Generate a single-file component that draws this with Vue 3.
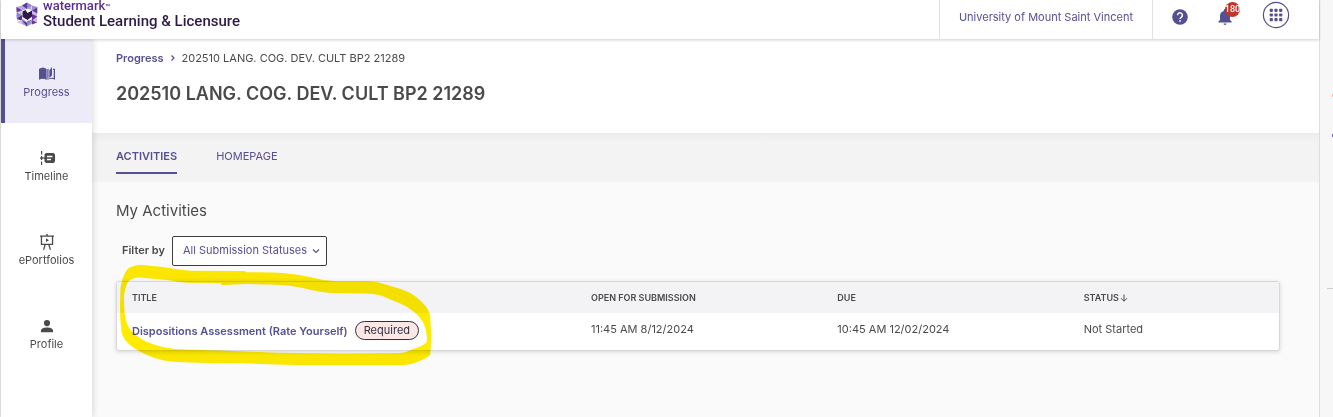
<template>
  <div class="shell">
    <div class="app">
      <header class="topbar">
        <a class="brand" href="#">
          <svg class="brand-mark" viewBox="0 0 24 26" aria-hidden="true">
            <path fill="#b5abd9" d="M12 1.500 16.500 4v5L12 8 7 9.500 2 12.500 1.500 6 7 4.500z" />
            <path fill="#cdc7e6" d="M7 9.500v8L2 20.500V12.500z" />
            <path fill="#a89dd3" d="M7 17.500l5 3.500 4.500-2.500 5.500 3-5.500 1.500L12 25.500 7 23z" />
            <path fill="#c4bce2" d="M16.500 8l5.500 4v9.500l-5.500-4z" />
            <path fill="#5b3a9b" d="M12 1.500V8L7 4.500z" />
            <path fill="#8d86c6" d="M12 1.500 17 4.500 12 7.500z" />
            <path fill="#6a35a0" d="M1.500 6 7 9.500 1.500 11z" />
            <path fill="#9a90cd" d="M17 4.500 22.300 6 17 9.500z" />
            <path fill="#6a35a0" d="M22.300 6v6.500L17 9.500z" />
            <path fill="#5b2d91" d="M1.500 17.500 7 14v6z" />
            <path fill="#8d86c6" d="M1.500 11.500 7 14l-5.500 3z" />
            <path fill="#6a35a0" d="M22.300 15.500 17 13v6.500z" />
            <path fill="#c9c3e5" d="M2 21.500 7 18.500v4.500z" />
            <path fill="#5b2d91" d="M7 19l5 3v3.500z" />
            <path fill="#8d86c6" d="M12 20l5-1.500-5 7z" />
            <path fill="#6a35a0" d="M17 19l5 2.500-5 2z" />
            <path fill="#2d1a45" d="M7.500 10.500 10.500 9l2 3L17 9.500v6L12.500 19 7.500 16z" />
          </svg>
          <span class="brand-text">
            <span class="brand-name">watermark<span class="brand-tm">™</span></span>
            <span class="brand-product">Student Learning &amp; Licensure</span>
          </span>
        </a>
        <div class="org">
          <a href="#">University of Mount Saint Vincent</a>
        </div>
        <div class="tools">
          <button class="tool" type="button" aria-label="Help">
            <svg class="help-icon" viewBox="0 0 16 16">
              <circle cx="8" cy="8" r="7.800" fill="#555092" />
              <path d="M5.600 6.300a2.400 2.400 0 1 1 3.800 1.900C8.500 8.800 8 9.100 8 10" fill="none" stroke="#fff" stroke-width="1.500" />
              <rect x="7.200" y="11.200" width="1.600" height="1.600" fill="#fff" />
            </svg>
          </button>
          <button class="tool bell" type="button" aria-label="Notifications">
            <svg class="bell-icon" viewBox="0 0 14 16">
              <path fill="#555092" d="M7 16a1.600 1.600 0 0 0 1.600-1.500H5.400A1.600 1.600 0 0 0 7 16zM12 11V7c0-2.500-1.300-4.500-3.700-5.100V1.300a1.200 1.200 0 0 0-2.500 0v.6C3.400 2.500 2 4.500 2 7v4L.4 12.600v.9h13.200v-.9z" />
            </svg>
            <span class="badge">180</span>
          </button>
          <button class="tool apps" type="button" aria-label="Apps">
            <svg class="apps-icon" viewBox="0 0 28 28">
              <circle cx="14" cy="14" r="12.600" fill="none" stroke="#555092" stroke-width="1.200" />
              <template v-for="row in 3" :key="row">
                <rect
                  v-for="col in 3"
                  :key="col"
                  :x="3 + col * 4.7"
                  :y="3 + row * 4.7"
                  width="3.200"
                  height="3.200"
                  rx="0.800"
                  fill="#555092"
                />
              </template>
            </svg>
          </button>
        </div>
      </header>

      <div class="body">
        <nav class="sidebar">
          <a
            v-for="item in navItems"
            :key="item.label"
            href="#"
            class="nav-item"
            :class="{ active: item.active }"
          >
            <svg class="nav-icon" viewBox="0 0 16 16" aria-hidden="true">
              <path v-for="d in item.paths" :key="d" :d="d" fill="currentColor" fill-rule="evenodd" />
            </svg>
            <span>{{ item.label }}</span>
          </a>
        </nav>

        <main class="main">
          <section class="page-head">
            <div class="crumbs">
              <a href="#">Progress</a>
              <svg class="crumb-sep" viewBox="0 0 6 8">
                <path d="M1.500 1.500 4 4 1.500 6.500" fill="none" stroke="#555092" stroke-width="1.200" />
              </svg>
              <span>{{ course }}</span>
            </div>
            <h1>{{ course }}</h1>
          </section>

          <div class="tabs">
            <a href="#" class="tab active">ACTIVITIES</a>
            <a href="#" class="tab">HOMEPAGE</a>
          </div>

          <section class="activities">
            <h2>My Activities</h2>
            <div class="filter">
              <label for="status">Filter by</label>
              <div class="select-wrap">
                <select id="status" v-model="status">
                  <option>All Submission Statuses</option>
                  <option>Not Started</option>
                  <option>Submitted</option>
                </select>
                <svg class="chevron" viewBox="0 0 8 6">
                  <path d="M1 1.500 4 4.500 7 1.500" fill="none" stroke="#555092" stroke-width="1.200" />
                </svg>
              </div>
            </div>

            <div class="card">
              <table>
                <thead>
                  <tr>
                    <th class="col-title">TITLE</th>
                    <th class="col-open">OPEN FOR SUBMISSION</th>
                    <th class="col-due">DUE</th>
                    <th class="col-status">
                      STATUS<svg class="sort" viewBox="0 0 8 8">
                        <path d="M4 .500v6.500M1 4.200l3 3 3-3" fill="none" stroke="#4a4a4a" />
                      </svg>
                    </th>
                  </tr>
                </thead>
                <tbody>
                  <tr v-for="row in rows" :key="row.title">
                    <td>
                      <div class="title-cell">
                        <a href="#">{{ row.title }}</a>
                        <span class="pill">Required</span>
                      </div>
                    </td>
                    <td>{{ row.open }}</td>
                    <td>{{ row.due }}</td>
                    <td>{{ row.status }}</td>
                  </tr>
                </tbody>
              </table>
              <!-- Hand-drawn highlighter loop around the activity -->
              <svg class="marker" viewBox="119 264 313 102" aria-hidden="true">
                <path
                  fill="#ffeb00"
                  fill-rule="evenodd"
                  d="M120.500 288C122 279 125 269 131 267Q137 264.500 145 265.300L163 267Q177 269.500 190 270.700L245 271L246 272.300Q270 272 283 273Q298 274 313 277.700Q325 281 336 281.300L364 281.300Q377 281 389 285.500Q401 288.500 410 292.700Q420 299 425.500 306Q430 312 430.300 317L431.200 337L430.300 355Q426 359 420 360.700Q410 365 403 365L297 365Q265 364 233 363Q205 363.500 177 362Q160 361 147 355Q136 350 130 345Q123 339 121.500 332Q120 320 120 307ZM124 300C124 292 126 285 128 282Q131 277.500 140 277.500L167 280Q180 282.500 190 282.700L220.700 283L222 285L247 284L277 284.700Q290 285 303 288Q320 292.500 332 293L360 293.600Q372 293 381 295.500Q388 298 395 301.500Q404 304.500 410 309Q419 315 423.500 323Q426.500 330 427 337L426.500 342.500Q421 347 413 349Q407 352.500 400 353L347 353.400L277 352.700L233 351Q207 350 187 349.500Q174 349.500 163 347Q149 344 140 338Q132 333 128.500 327Q125 320 124.500 313Z"
                />
              </svg>
            </div>
          </section>
        </main>
      </div>
    </div>
    <aside class="rail">
      <span class="rail-dot orange"></span>
      <span class="rail-dot violet"></span>
      <span class="rail-line"></span>
    </aside>
  </div>
</template>

<script setup>
import { ref } from 'vue'

const course = '202510 LANG. COG. DEV. CULT BP2 21289'
const status = ref('All Submission Statuses')

const navItems = [
  {
    label: 'Progress',
    active: true,
    paths: [
      'M0 3Q4-.2 7.600 3V14Q4 11.500 0 13.700z',
      'M8.300 3.200 9.500 2.400V12.300L8.300 13z',
      'M10.300 4.500 13 1V9.500L10.300 12z',
      'M14 2.500 16 3V13.700Q12 11.700 8.400 14V13.200L11 12Q13 11.300 14.700 12V4L14 3.800z'
    ]
  },
  {
    label: 'Timeline',
    paths: [
      'M2 1h1.200v3.500H2zM2 11.500h1.200V15H2zM2 6h1.200v4H2z',
      'M1 7.400h5v1.300H1z',
      'M7 3h7.500L16 4.500v7L14.500 13H7L5.500 11.500v-7zM8 5.800v1.400h5.500V5.800zM8 8.800v1.400h4V8.800z'
    ]
  },
  {
    label: 'ePortfolios',
    paths: [
      'M7.300 0h1.400v1.500H15v1.300h-.8V11H1.800V2.800H1V1.500h6.300zM3.100 2.800v6.900h9.800V2.800z',
      'M7 4.300 10 6.200 7 8.100z',
      'M5.300 11h1.400L5.300 15.700H4zM9.300 11h1.400L12 15.700h-1.300z'
    ]
  },
  {
    label: 'Profile',
    paths: [
      'M8 2a3 3 0 1 1 0 6.200A3 3 0 1 1 8 2z',
      'M2 14.200V12.500C2 10.200 5.500 9.400 8 9.400s6 .800 6 3.100v1.700z'
    ]
  }
]

const rows = [
  {
    title: 'Dispositions Assessment (Rate Yourself)',
    open: '11:45 AM 8/12/2024',
    due: '10:45 AM 12/02/2024',
    status: 'Not Started'
  }
]
</script>

<style>
body {
  background: #f7f7f7;
}
</style>

<style scoped>
.shell {
  display: flex;
  min-height: 100vh;
  color: #4a4a4a;
  font-family: Inter, "Liberation Sans", sans-serif;
  font-size: 11px;
  line-height: 16px;
}

.shell * {
  box-sizing: border-box;
}

a {
  color: #555092;
  text-decoration: none;
}

.app {
  display: flex;
  flex: 1;
  flex-direction: column;
  background: #fafafa;
  border-left: 1px solid #e4e4e4;
}

.topbar {
  position: relative;
  z-index: 2;
  display: flex;
  height: 39px;
  background: #fff;
  box-shadow: 0 1px 3px rgba(0, 0, 0, 0.2);
}

.brand {
  display: flex;
  gap: 4px;
  margin-right: auto;
  padding-left: 14px;
  color: #2d1a45;
}

.brand-mark {
  width: 24px;
  height: 26px;
  margin-top: 1px;
}

.brand-text {
  display: flex;
  flex-direction: column;
  font-family: Roboto, sans-serif;
  font-weight: 500;
}

.brand-name {
  color: #5b2d91;
  font-size: 13px;
  line-height: 12px;
}

.brand-tm {
  font-size: 8px;
}

.brand-product {
  font-size: 15px;
  line-height: 14px;
}

.org {
  display: flex;
  align-items: center;
  padding: 0 19px 6px;
  border: solid #e2e2e6;
  border-width: 0 1px;
}

.tools {
  display: flex;
  align-items: center;
  gap: 30px;
  padding: 0 29px 6px 19px;
}

.tool {
  display: flex;
  padding: 0;
  background: none;
  border: 0;
}

.help-icon {
  width: 16px;
  height: 16px;
}

.bell {
  position: relative;
}

.bell-icon {
  width: 14px;
  height: 16px;
}

.badge {
  position: absolute;
  top: -7px;
  left: 7px;
  display: flex;
  align-items: center;
  justify-content: center;
  width: 15px;
  height: 15px;
  background: #c4342b;
  border-radius: 50%;
  color: #fff;
  font-family: Roboto, sans-serif;
  font-size: 9px;
  font-weight: 500;
}

.apps {
  align-self: flex-start;
  padding-top: 1px;
}

.apps-icon {
  width: 28px;
  height: 28px;
}

.body {
  display: flex;
  flex: 1;
}

.sidebar {
  position: relative;
  z-index: 1;
  width: 91px;
  background: #fff;
  box-shadow: 1px 0 6px rgba(0, 0, 0, 0.15);
}

.nav-item {
  display: flex;
  flex-direction: column;
  align-items: center;
  justify-content: center;
  gap: 2px;
  height: 84px;
  padding-top: 4px;
  color: #4a4a4a;
}

.nav-item.active {
  padding-right: 4px;
  background: #edebf7;
  border-left: 4px solid #555092;
  color: #555092;
}

.nav-icon {
  width: 16px;
  height: 16px;
}

.main {
  flex: 1;
}

.page-head {
  height: 94px;
  padding: 11px 24px 0;
  background: #fff;
}

.crumbs {
  display: flex;
  align-items: center;
  gap: 6px;
}

.crumbs a {
  font-weight: 600;
}

.crumb-sep {
  width: 6px;
  height: 8px;
}

h1 {
  margin: 16px 0 0;
  font-size: 18px;
  font-weight: 600;
  line-height: 24px;
}

.tabs {
  display: flex;
  gap: 39px;
  height: 49px;
  padding: 15px 24px 0;
  background: linear-gradient(#ececec, #f3f3f3 10px);
}

.tab {
  height: 26px;
}

.tab.active {
  border-bottom: 2px solid #555092;
  font-weight: 600;
}

.activities {
  padding: 19px 39px 0 24px;
}

h2 {
  margin: 0;
  font-size: 15px;
  font-weight: 400;
  line-height: 20px;
}

.filter {
  display: flex;
  align-items: center;
  gap: 7px;
  margin: 15px 0;
  padding-left: 6px;
}

.filter label {
  padding-bottom: 2px;
  font-weight: 600;
}

.select-wrap {
  position: relative;
}

select {
  height: 30px;
  padding: 0 18px 2px 10px;
  appearance: none;
  background: #fff;
  border: 1px solid #3d3d3d;
  border-radius: 2px;
  color: #555092;
  font: inherit;
}

.chevron {
  position: absolute;
  top: 12px;
  right: 7px;
  width: 8px;
  height: 6px;
  pointer-events: none;
}

.card {
  position: relative;
  background: #fff;
  border: 1px solid #d8d8dc;
  border-radius: 3px;
  box-shadow: 0 1px 4px rgba(0, 0, 0, 0.15);
}

table {
  width: 100%;
  border-collapse: collapse;
  table-layout: fixed;
}

th {
  height: 31px;
  padding: 0 15px;
  background: #f3f3f6;
  font-size: 9px;
  font-weight: 600;
  text-align: left;
}

td {
  height: 37px;
  padding: 8px 15px 0;
  vertical-align: top;
}

.col-title {
  width: 39.5%;
}

.col-open,
.col-due {
  width: 21.2%;
}

.sort {
  width: 8px;
  height: 8px;
  margin-left: 1px;
  vertical-align: -1px;
}

.title-cell {
  display: flex;
  align-items: center;
  gap: 7px;
}

.title-cell a {
  font-weight: 600;
}

.pill {
  padding: 0 8px;
  background: #fbe7e6;
  border: 1px solid #33303f;
  border-radius: 10px;
  color: #33303f;
  line-height: 17px;
}

.marker {
  position: absolute;
  top: -18px;
  left: 2px;
  width: 313px;
  height: 102px;
  mix-blend-mode: multiply;
  pointer-events: none;
}

.rail {
  display: flex;
  flex-direction: column;
  align-items: flex-end;
  width: 14px;
  padding-top: 94px;
  background: #f7f7f7;
  border-left: 1px solid #dedede;
}

.rail-dot {
  width: 1px;
  height: 3px;
}

.orange {
  background: #f0b9a0;
}

.violet {
  margin-top: 37px;
  background: #8160cf;
}

.rail-line {
  width: 6px;
  height: 1px;
  margin-top: 151px;
  background: #cfcfcf;
}
</style>
